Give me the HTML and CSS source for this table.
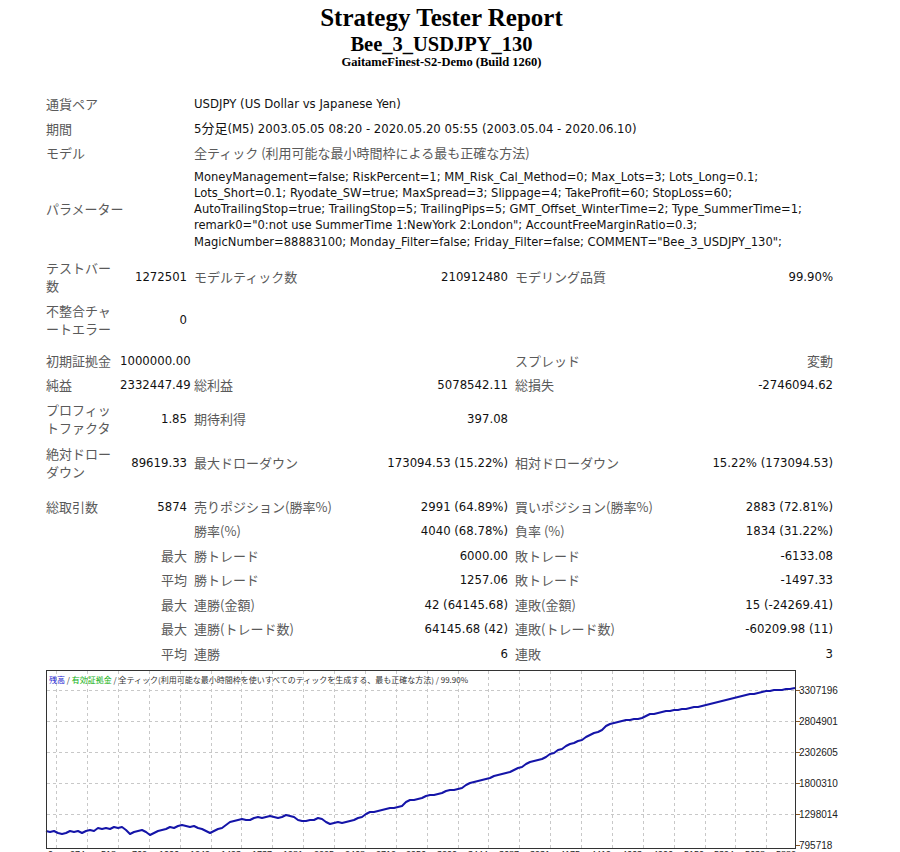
FILE: index.html
```html
<!DOCTYPE html>
<html lang="ja">
<head>
<meta charset="utf-8">
<title>Strategy Tester: Bee_3_USDJPY_130</title>
<link rel="stylesheet" href="styles.css">
</head>
<body>
<div class="page">
  <header class="head">
    <div class="t1">Strategy Tester Report</div>
    <div class="t2">Bee_3_USDJPY_130</div>
    <div class="t3">GaitameFinest-S2-Demo (Build 1260)</div>
  </header>

  <table class="rep">
    <colgroup>
      <col class="c1"><col class="c2"><col class="c3"><col class="c4"><col class="c5"><col class="c6">
    </colgroup>
    <tr><td colspan="2" class="lb">通貨ペア</td><td colspan="4">USDJPY (US Dollar vs Japanese Yen)</td></tr>
    <tr><td colspan="2" class="lb">期間</td><td colspan="4">5分足(M5) 2003.05.05 08:20 - 2020.05.20 05:55 (2003.05.04 - 2020.06.10)</td></tr>
    <tr><td colspan="2" class="lb">モデル</td><td colspan="4" class="lb">全ティック (利用可能な最小時間枠による最も正確な方法)</td></tr>
    <tr class="prm"><td colspan="2" class="lb">パラメーター</td><td colspan="4" class="pv">MoneyManagement=false; RiskPercent=1; MM_Risk_Cal_Method=0; Max_Lots=3; Lots_Long=0.1;<br>Lots_Short=0.1; Ryodate_SW=true; MaxSpread=3; Slippage=4; TakeProfit=60; StopLoss=60;<br>AutoTrailingStop=true; TrailingStop=5; TrailingPips=5; GMT_Offset_WinterTime=2; Type_SummerTime=1;<br>remark0="0:not use SummerTime 1:NewYork 2:London"; AccountFreeMarginRatio=0.3;<br>MagicNumber=88883100; Monday_Filter=false; Friday_Filter=false; COMMENT="Bee_3_USDJPY_130";</td></tr>
    <tr class="two"><td class="lb">テストバー数</td><td class="r">1272501</td><td class="lb">モデルティック数</td><td class="r">210912480</td><td class="lb">モデリング品質</td><td class="r">99.90%</td></tr>
    <tr class="two"><td class="lb">不整合チャートエラー</td><td class="r">0</td><td></td><td></td><td></td><td></td></tr>
    <tr class="gap"><td colspan="6"></td></tr>
    <tr><td class="lb">初期証拠金</td><td class="r">1000000.00</td><td></td><td></td><td class="lb">スプレッド</td><td class="r lb">変動</td></tr>
    <tr><td class="lb">純益</td><td class="r">2332447.49</td><td class="lb">総利益</td><td class="r">5078542.11</td><td class="lb">総損失</td><td class="r">-2746094.62</td></tr>
    <tr class="two"><td class="lb">プロフィットファクタ</td><td class="r">1.85</td><td class="lb">期待利得</td><td class="r">397.08</td><td></td><td></td></tr>
    <tr class="two dd"><td class="lb">絶対ドローダウン</td><td class="r">89619.33</td><td class="lb">最大ドローダウン</td><td class="r">173094.53 (15.22%)</td><td class="lb">相対ドローダウン</td><td class="r">15.22% (173094.53)</td></tr>
    <tr class="gap2"><td colspan="6"></td></tr>
    <tr><td class="lb">総取引数</td><td class="r">5874</td><td class="lb">売りポジション(勝率%)</td><td class="r">2991 (64.89%)</td><td class="lb">買いポジション(勝率%)</td><td class="r">2883 (72.81%)</td></tr>
    <tr><td colspan="2"></td><td class="lb">勝率(%)</td><td class="r">4040 (68.78%)</td><td class="lb">負率 (%)</td><td class="r">1834 (31.22%)</td></tr>
    <tr><td colspan="2" class="r lb">最大</td><td class="lb">勝トレード</td><td class="r">6000.00</td><td class="lb">敗トレード</td><td class="r">-6133.08</td></tr>
    <tr><td colspan="2" class="r lb">平均</td><td class="lb">勝トレード</td><td class="r">1257.06</td><td class="lb">敗トレード</td><td class="r">-1497.33</td></tr>
    <tr><td colspan="2" class="r lb">最大</td><td class="lb">連勝(金額)</td><td class="r">42 (64145.68)</td><td class="lb">連敗(金額)</td><td class="r">15 (-24269.41)</td></tr>
    <tr><td colspan="2" class="r lb">最大</td><td class="lb">連勝(トレード数)</td><td class="r">64145.68 (42)</td><td class="lb">連敗(トレード数)</td><td class="r">-60209.98 (11)</td></tr>
    <tr><td colspan="2" class="r lb">平均</td><td class="lb">連勝</td><td class="r">6</td><td class="lb">連敗</td><td class="r">3</td></tr>
  </table>

  <div class="chart">
    <svg class="graph" width="800" height="200" viewBox="0 0 800 200" xmlns="http://www.w3.org/2000/svg">
      <rect x="0" y="0" width="800" height="200" fill="#ffffff"/>
      <g stroke="#c8c8c8" stroke-width="1" stroke-dasharray="3,3">
        <line x1="1" y1="20.5" x2="749" y2="20.5"/>
        <line x1="1" y1="51.5" x2="749" y2="51.5"/>
        <line x1="1" y1="82.5" x2="749" y2="82.5"/>
        <line x1="1" y1="113.5" x2="749" y2="113.5"/>
        <line x1="1" y1="144.5" x2="749" y2="144.5"/>
        <line x1="10.5" y1="1" x2="10.5" y2="178"/>
        <line x1="41.5" y1="1" x2="41.5" y2="178"/>
        <line x1="72.5" y1="1" x2="72.5" y2="178"/>
        <line x1="103.5" y1="1" x2="103.5" y2="178"/>
        <line x1="134.5" y1="1" x2="134.5" y2="178"/>
        <line x1="165.5" y1="1" x2="165.5" y2="178"/>
        <line x1="195.5" y1="1" x2="195.5" y2="178"/>
        <line x1="226.5" y1="1" x2="226.5" y2="178"/>
        <line x1="257.5" y1="1" x2="257.5" y2="178"/>
        <line x1="288.5" y1="1" x2="288.5" y2="178"/>
        <line x1="319.5" y1="1" x2="319.5" y2="178"/>
        <line x1="350.5" y1="1" x2="350.5" y2="178"/>
        <line x1="381.5" y1="1" x2="381.5" y2="178"/>
        <line x1="412.5" y1="1" x2="412.5" y2="178"/>
        <line x1="442.5" y1="1" x2="442.5" y2="178"/>
        <line x1="473.5" y1="1" x2="473.5" y2="178"/>
        <line x1="504.5" y1="1" x2="504.5" y2="178"/>
        <line x1="535.5" y1="1" x2="535.5" y2="178"/>
        <line x1="566.5" y1="1" x2="566.5" y2="178"/>
        <line x1="597.5" y1="1" x2="597.5" y2="178"/>
        <line x1="628.5" y1="1" x2="628.5" y2="178"/>
        <line x1="659.5" y1="1" x2="659.5" y2="178"/>
        <line x1="689.5" y1="1" x2="689.5" y2="178"/>
        <line x1="720.5" y1="1" x2="720.5" y2="178"/>
      </g>
      <polyline fill="none" stroke="#1414a8" stroke-width="2" stroke-linejoin="round"
        points="0,161 4,162 8,161 12,163 16,164 20,163 24,161 28,162 32,161 36,163 40,161 44,160 48,161 52,158 56,159 60,158 64,159 68,157 72,158 76,157 80,160 84,164 88,162 92,161 96,160 100,162 104,165 108,163 112,161 116,160 120,159 124,157 128,158 132,156 136,155 140,156 144,157 148,156 152,158 156,159 160,161 164,163 168,161 172,159 176,158 180,155 184,152 188,151 192,150 196,149 200,150 204,150 208,148 212,147 216,148 220,147 224,146 228,147 232,148 236,147 240,145 244,146 248,147 252,150 256,151 260,151 264,150 268,150 272,148 276,149 280,152 284,154 288,153 292,152 296,153 300,152 304,151 308,150 312,148 316,147 320,144 324,142 328,142 332,141 336,140 340,139 344,138 348,138 352,137 356,136 360,132 364,130 368,130 372,129 376,128 380,126 384,125 388,125 392,124 396,123 400,121 404,120 408,120 412,119 416,118 420,115 424,113 428,112 432,111 436,110 440,109 444,108 448,106 452,105 456,104 460,103 464,102 468,100 472,98 476,97 480,94 484,92 488,91 492,90 496,89 500,87 504,84 508,83 512,80 516,79 520,76 524,74 528,73 532,71 536,70 540,67 544,65 548,63 552,62 556,60 560,56 564,54 568,53 572,52 576,51 580,50 584,50 588,49 592,49 596,48 600,46 604,44 608,44 612,43 616,42 620,41 624,41 628,40 632,40 636,39 640,39 644,38 648,37 652,37 656,36 660,35 664,34 668,33 672,32 676,31 680,30 684,29 688,28 692,27 696,26 700,25 704,24 708,24 712,23 716,22 720,21 724,21 728,20 732,20 736,20 740,19 744,19 749,18"/>
      <rect x="0.5" y="0.5" width="749" height="178" fill="none" stroke="#333" stroke-width="1"/>
      <g stroke="#8a5a2a" stroke-width="1">
        <line x1="750" y1="20.5" x2="754" y2="20.5"/>
        <line x1="750" y1="51.5" x2="754" y2="51.5"/>
        <line x1="750" y1="82.5" x2="754" y2="82.5"/>
        <line x1="750" y1="113.5" x2="754" y2="113.5"/>
        <line x1="750" y1="144.5" x2="754" y2="144.5"/>
        <line x1="750" y1="175.5" x2="754" y2="175.5"/>
      </g>
      <g class="ylab">
        <text x="753" y="24">3307196</text>
        <text x="753" y="55">2804901</text>
        <text x="753" y="86">2302605</text>
        <text x="753" y="117">1800310</text>
        <text x="753" y="148">1298014</text>
        <text x="753" y="179">795718</text>
      </g>
      <g class="xlab">
        <text x="2" y="187">0</text>
        <text x="24" y="187">274</text>
        <text x="55" y="187">518</text>
        <text x="86" y="187">762</text>
        <text x="113" y="187">1006</text>
        <text x="144" y="187">1249</text>
        <text x="175" y="187">1493</text>
        <text x="206" y="187">1737</text>
        <text x="237" y="187">1981</text>
        <text x="268" y="187">2225</text>
        <text x="299" y="187">2468</text>
        <text x="330" y="187">2712</text>
        <text x="360" y="187">2956</text>
        <text x="391" y="187">3200</text>
        <text x="422" y="187">3444</text>
        <text x="453" y="187">3687</text>
        <text x="484" y="187">3931</text>
        <text x="514" y="187">4175</text>
        <text x="545" y="187">4419</text>
        <text x="576" y="187">4663</text>
        <text x="607" y="187">4906</text>
        <text x="638" y="187">5150</text>
        <text x="668" y="187">5394</text>
        <text x="699" y="187">5638</text>
        <text x="730" y="187">5882</text>
      </g>
      <text class="legend" x="3" y="13"><tspan fill="#1a1ad0">残高</tspan> / <tspan fill="#10b010">有効証拠金</tspan> / 全ティック(利用可能な最小時間枠を使いすべてのティックを生成する、最も正確な方法) / 99.90%</text>
    </svg>
  </div>
</div>
</body>
</html>
```

FILE: styles.css
```css
html {
  overflow: hidden;
  background: #ffffff;
}

body {
  margin: 0;
  background: #ffffff;
  color: #111111;
}

.page {
  width: 883px;
}

.head {
  text-align: center;
  font-family: "Liberation Serif", "Times New Roman", serif;
  font-weight: bold;
  color: #000000;
  padding-top: 5px;
}

.t1 {
  font-size: 25px;
  line-height: 26px;
}

.t2 {
  font-size: 20.5px;
  line-height: 24px;
  margin-top: 1px;
}

.t3 {
  font-size: 12.5px;
  line-height: 13px;
}

.rep {
  margin-top: 22px;
  margin-left: 42px;
  width: 795px;
  table-layout: fixed;
  border-collapse: separate;
  border-spacing: 1px;
  font-family: "DejaVu Sans Condensed", "Liberation Sans", "Noto Sans CJK JP", sans-serif;
  font-stretch: condensed;
  font-size: 13px;
  color: #111111;
}

.c1 { width: 73px; }
.c2 { width: 73px; }
.c3 { width: 169px; }
.c4 { width: 150px; }
.c5 { width: 178px; }
.c6 { width: 145px; }

.rep td {
  padding: 3px;
  line-height: 17.5px;
  vertical-align: middle;
  white-space: normal;
  overflow: visible;
}

.rep .lb {
  font-family: "Noto Sans CJK JP", sans-serif;
  font-size: 13px;
  color: #5a5a5a;
}

.rep .r {
  text-align: right;
  white-space: nowrap;
}

.rep .two td {
  line-height: 18px;
}

.rep .two td.lb {
  word-break: break-all;
}

.rep .prm td {
  padding-bottom: 5px;
}

.rep .pv {
  font-size: 12.8px;
  line-height: 16.25px;
  white-space: nowrap;
}

.rep .dd td {
  padding-top: 4px;
  padding-bottom: 4px;
}

.rep .gap td {
  height: 0;
  padding: 0;
  line-height: 6px;
  font-size: 1px;
}

.rep .gap td::after {
  content: "";
  display: block;
  height: 6px;
}

.rep .gap2 td {
  padding: 0;
  font-size: 1px;
  line-height: 1px;
}

.rep .gap2 td::after {
  content: "";
  display: block;
  height: 8px;
}

.chart {
  margin-top: 4px;
  margin-left: 46px;
  height: 200px;
}

.graph {
  display: block;
  overflow: visible;
}

.ylab text {
  font-family: "Liberation Sans", sans-serif;
  font-size: 10px;
  fill: #222222;
}

.xlab text {
  font-family: "Liberation Sans", sans-serif;
  font-size: 9px;
  fill: #222222;
}

.legend {
  font-family: "Noto Sans CJK JP", sans-serif;
  font-size: 8px;
  fill: #333333;
}
```
